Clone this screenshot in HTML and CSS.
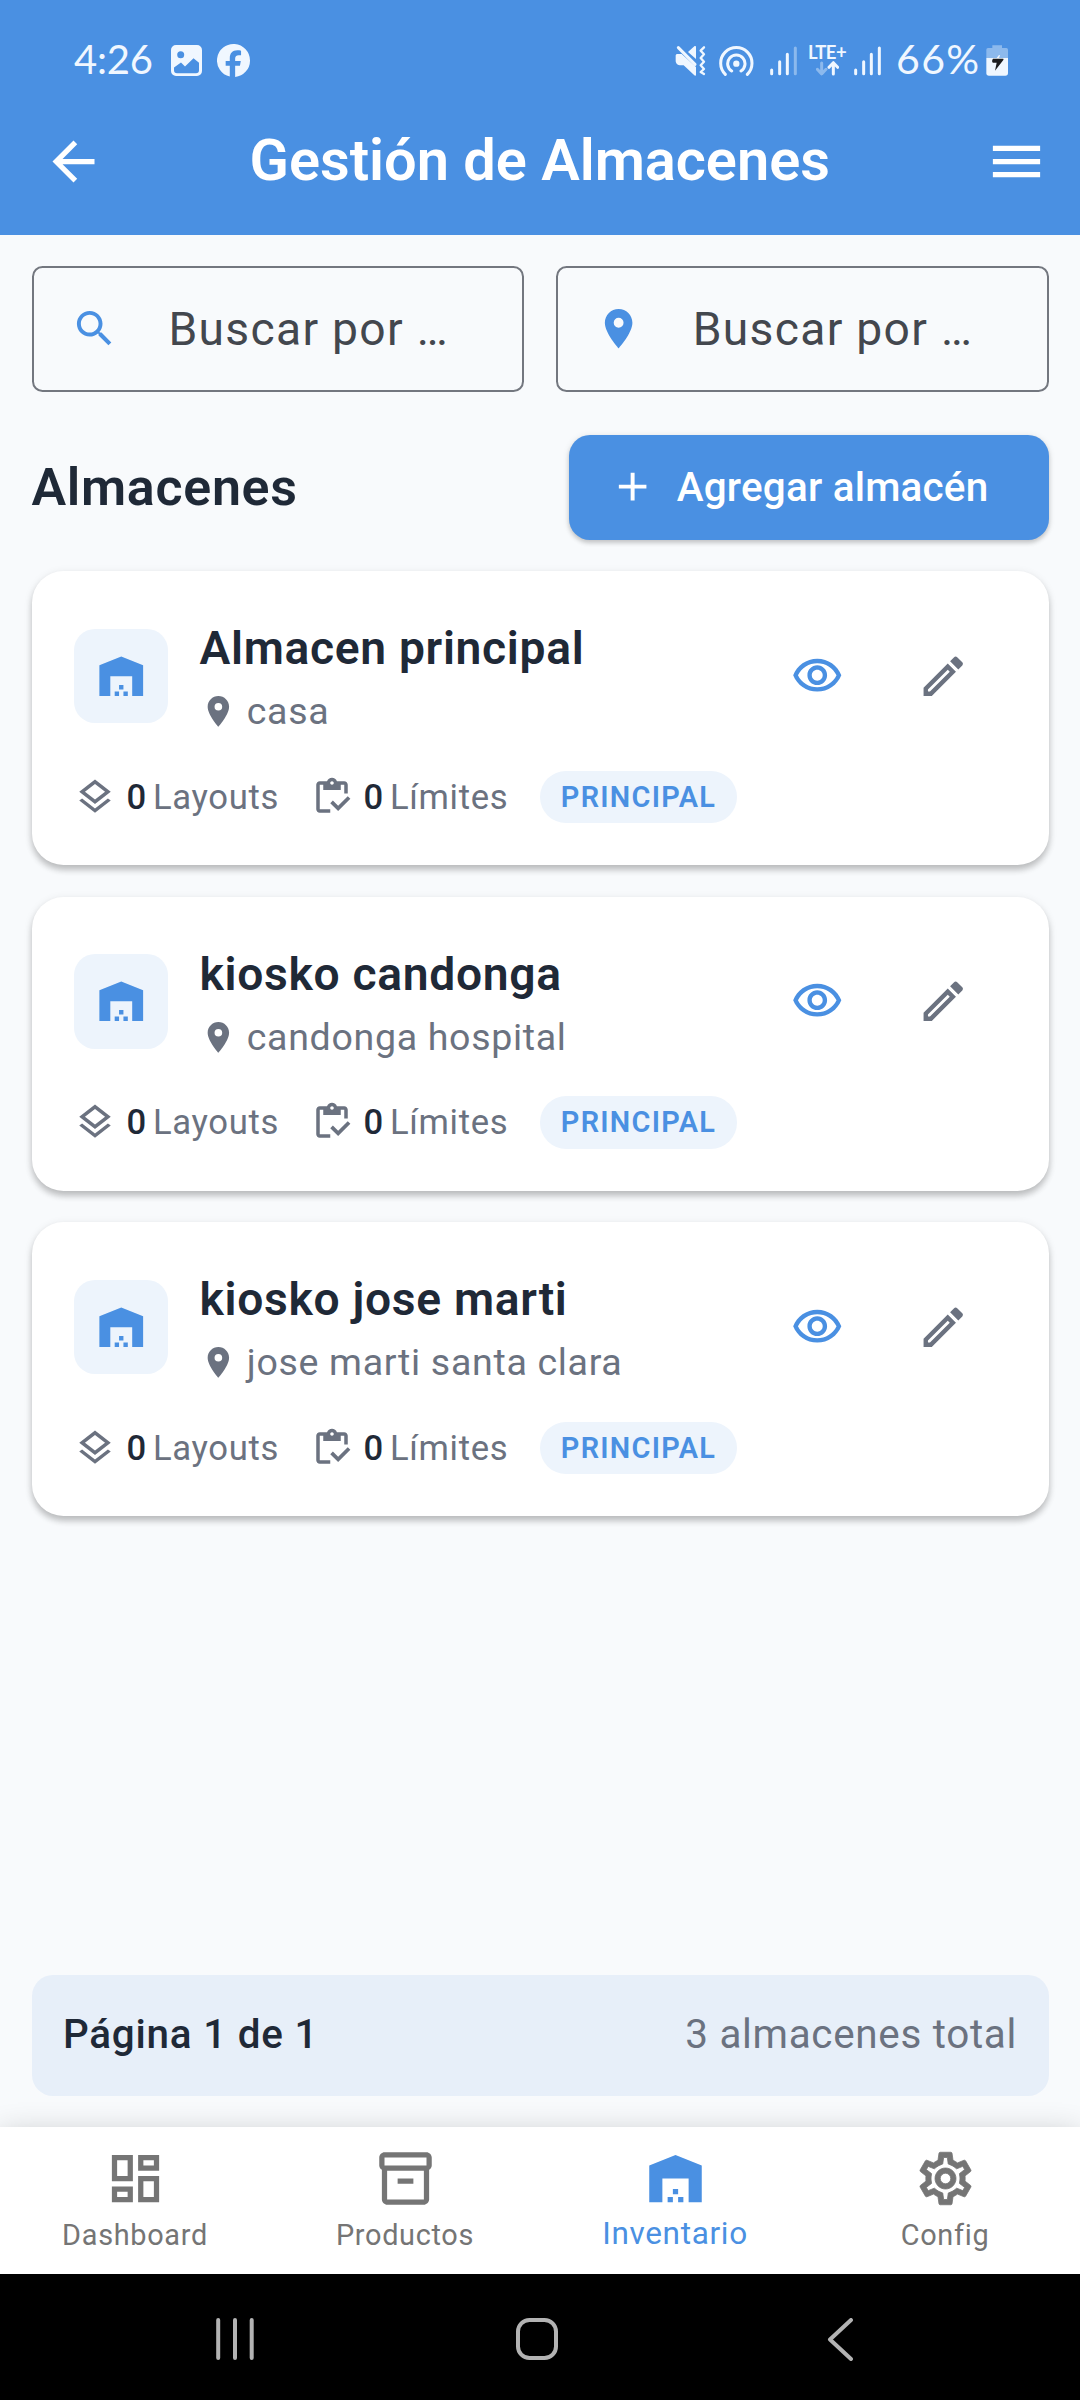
FILE: index.html
```html
<!DOCTYPE html>
<html lang="es">
<head>
<meta charset="utf-8">
<title>Gestión de Almacenes</title>
<link rel="stylesheet" href="styles.css">
</head>
<body>
<svg class="defs" aria-hidden="true">
  <symbol id="warehouse" viewBox="0 0 24 24"><path d="M22 21V7L12 3 2 7v14h5v-9h10v9h5zm-11-2H9v2h2v-2zm2-3h-2v2h2v-2zm2 3h-2v2h2v-2z"/></symbol>
  <symbol id="pin" viewBox="0 0 24 24"><path d="M12 2C8.13 2 5 5.13 5 9c0 5.25 7 13 7 13s7-7.75 7-13c0-3.87-3.13-7-7-7zm0 9.5a2.5 2.5 0 0 1 0-5 2.5 2.5 0 0 1 0 5z"/></symbol>
  <symbol id="layers" viewBox="0 0 24 24"><path d="M11.99 18.54l-7.37-5.73L3 14.07l9 7 9-7-1.63-1.27-7.38 5.74zM12 16l7.36-5.73L21 9l-9-7-9 7 1.63 1.27L12 16zm0-11.47L17.74 9 12 13.47 6.26 9 12 4.53z"/></symbol>
  <symbol id="limits" viewBox="0 0 24 24"><path d="M5 5h2v3h10V5h2v5h2V5c0-1.1-.9-2-2-2h-4.18C14.4 1.84 13.3 1 12 1s-2.4.84-2.82 2H5c-1.1 0-2 .9-2 2v14c0 1.1.9 2 2 2h6v-2H5V5zm7-2c.55 0 1 .45 1 1s-.45 1-1 1-1-.45-1-1 .45-1 1-1z"/><path d="M21 11.5L15.51 17l-3.01-3-1.5 1.5 4.51 4.5L22.5 13z"/></symbol>
  <symbol id="eye" viewBox="0 0 24 24"><path d="M12 6c3.79 0 7.17 2.13 8.82 5.5C19.17 14.87 15.79 17 12 17s-7.17-2.13-8.82-5.5C4.83 8.13 8.21 6 12 6m0-2C7 4 2.73 7.11 1 11.5 2.73 15.89 7 19 12 19s9.27-3.11 11-7.5C21.27 7.11 17 4 12 4zm0 5c1.38 0 2.5 1.12 2.5 2.5S13.38 14 12 14s-2.5-1.12-2.5-2.5S10.62 9 12 9m0-2c-2.48 0-4.5 2.02-4.5 4.5S9.52 16 12 16s4.5-2.02 4.5-4.5S14.48 7 12 7z"/></symbol>
  <symbol id="edit" viewBox="0 0 24 24"><path d="M14.06 9.02l.92.92L5.92 19H5v-.92l9.06-9.06M17.66 3c-.25 0-.51.1-.7.29l-1.83 1.83 3.75 3.75 1.83-1.83c.39-.39.39-1.02 0-1.41l-2.34-2.34c-.2-.2-.45-.29-.71-.29zm-3.6 3.19L3 17.25V21h3.75L17.81 9.94l-3.75-3.75z"/></symbol>
</svg>

<header class="top">
  <div class="status">
    <div class="status-left">
      <span class="clock">4:26</span>
      <svg class="photo" width="31" height="31" viewBox="0 0 31 31"><path fill-rule="evenodd" d="M5 0h21a5 5 0 0 1 5 5v21a5 5 0 0 1-5 5H5a5 5 0 0 1-5-5V5a5 5 0 0 1 5-5zM9.700 6.300a3.500 3.500 0 1 0 0 7 3.500 3.500 0 0 0 0-7zM3 22.500v2.700a3 3 0 0 0 3 3h19a3 3 0 0 0 3-3v-7.500l-5.500-4.500-8.500 8.300-4-4z"/></svg>
      <svg width="33" height="33" viewBox="0 0 24 24"><path d="M24 12a12 12 0 1 0-14.700 11.700v-7.900H6.300v-3.500h3V10.500c0-3.600 1.800-5.900 5.500-5.900.9 0 1.900.1 2.700.3v3.200h-1.700c-1.900 0-2.600.9-2.600 2.500v1.700h4.100l-.6 3.500h-3.500V24A12 12 0 0 0 24 12z"/></svg>
    </div>
    <div class="status-right">
      <svg class="mute" width="31" height="31" viewBox="40 30 93 93"><path d="M48 57h12l43 39v23c0 3-3 4-5 2L66 91h-8c-10 0-16-6-16-14V63c0-4 2-6 6-6zM79 51l19-17c2-2 5-1 5 2v36z"/><path class="line" d="M50 38l50 50"/><path class="line wave" d="M127 37l-10 10 10 11-10 11 10 11-10 11 10 11-10 9 10 6"/></svg>
      <svg class="hotspot" width="35" height="31" viewBox="173 29 105 93"><circle cx="225" cy="85" r="9.500"/><path class="line" d="M211 107a26 26 0 1 1 28 0M192 117a47 47 0 1 1 66 0"/></svg>
      <svg class="signal-a" width="29" height="31" viewBox="328 29 87 93"><path class="line" d="M333 104v11M357 79v36M380 57v58"/><path class="line dim" d="M404 38v77"/></svg>
      <span class="lte"><b>LTE+</b><svg width="23" height="15" viewBox="460 82 69 45"><path class="line dim" d="M477 88v32m-13-13 13 14 13-14"/><path class="line" d="M512 121V87m-13 14 13-14 13 14"/></svg></span>
      <svg class="signal-b" width="29" height="31" viewBox="328 29 87 93"><path class="line" d="M333 104v11M357 79v36M380 57v58M404 38v77"/></svg>
      <span class="percent">66%</span>
      <svg width="22" height="31" viewBox="436 31 66 93"><path opacity=".4" d="M455 32h29v8h13q5 0 5 5v25h-65V45q0-5 5-5h13z"/><path d="M437 70h65v45q0 8-8 8h-49q-8 0-8-8z"/><path d="M468 70l7-9 3 1-3 8z"/><path class="bolt" d="M457 72h29c3 0 3 2 2 4l-25 32 5-24h-11c-3-1-4-8 0-12z"/></svg>
    </div>
  </div>
  <div class="appbar">
    <svg class="i24" viewBox="0 0 24 24"><path d="M20 11H7.830l5.590-5.590L12 4l-8 8 8 8 1.410-1.410L7.830 13H20v-2z"/></svg>
    <h1>Gestión de Almacenes</h1>
    <svg class="i24" viewBox="0 0 24 24"><path d="M3 18h18v-2H3v2zm0-5h18v-2H3v2zm0-7v2h18V6H3z"/></svg>
  </div>
</header>

<main>
  <div class="filters">
    <label class="field"><span class="prefix"><svg class="i18" viewBox="0 0 24 24"><path d="M15.500 14h-.79l-.28-.27C15.410 12.590 16 11.110 16 9.500 16 5.910 13.090 3 9.500 3S3 5.910 3 9.500 5.910 16 9.500 16c1.610 0 3.090-.59 4.230-1.570l.27.28v.79l5 4.990L20.490 19l-4.990-5zm-6 0C7.010 14 5 11.990 5 9.500S7.010 5 9.500 5 14 7.010 14 9.500 11.990 14 9.500 14z"/></svg></span><span>Buscar por …</span></label>
    <label class="field"><span class="prefix"><svg class="i18"><use href="#pin"/></svg></span><span>Buscar por …</span></label>
  </div>
  <div class="heading">
    <h2>Almacenes</h2>
    <button class="add"><svg class="i18" viewBox="0 0 24 24"><path d="M19 13h-6v6h-2v-6H5v-2h6V5h2v6h6v2z"/></svg><span>Agregar almacén</span></button>
  </div>

  <section class="cards">
    <article class="card">
      <div class="row">
        <div class="tile"><svg class="i20"><use href="#warehouse"/></svg></div>
        <div class="info"><h3>Almacen principal</h3><p><svg class="i14"><use href="#pin"/></svg>casa</p></div>
        <div class="action view"><svg class="i20"><use href="#eye"/></svg></div>
        <div class="action"><svg class="i20"><use href="#edit"/></svg></div>
      </div>
      <div class="stats">
        <div class="stat"><svg class="i16"><use href="#layers"/></svg><b>0</b><span>Layouts</span></div>
        <div class="stat"><svg class="i16"><use href="#limits"/></svg><b>0</b><span>Límites</span></div>
        <span class="chip">PRINCIPAL</span>
      </div>
    </article>
    <article class="card">
      <div class="row">
        <div class="tile"><svg class="i20"><use href="#warehouse"/></svg></div>
        <div class="info"><h3>kiosko candonga</h3><p><svg class="i14"><use href="#pin"/></svg>candonga hospital</p></div>
        <div class="action view"><svg class="i20"><use href="#eye"/></svg></div>
        <div class="action"><svg class="i20"><use href="#edit"/></svg></div>
      </div>
      <div class="stats">
        <div class="stat"><svg class="i16"><use href="#layers"/></svg><b>0</b><span>Layouts</span></div>
        <div class="stat"><svg class="i16"><use href="#limits"/></svg><b>0</b><span>Límites</span></div>
        <span class="chip">PRINCIPAL</span>
      </div>
    </article>
    <article class="card">
      <div class="row">
        <div class="tile"><svg class="i20"><use href="#warehouse"/></svg></div>
        <div class="info"><h3>kiosko jose marti</h3><p><svg class="i14"><use href="#pin"/></svg>jose marti santa clara</p></div>
        <div class="action view"><svg class="i20"><use href="#eye"/></svg></div>
        <div class="action"><svg class="i20"><use href="#edit"/></svg></div>
      </div>
      <div class="stats">
        <div class="stat"><svg class="i16"><use href="#layers"/></svg><b>0</b><span>Layouts</span></div>
        <div class="stat"><svg class="i16"><use href="#limits"/></svg><b>0</b><span>Límites</span></div>
        <span class="chip">PRINCIPAL</span>
      </div>
    </article>
  </section>

  <div class="pager"><strong>Página 1 de 1</strong><span>3 almacenes total</span></div>
</main>

<nav class="tabs">
  <a class="tab"><svg class="i24" viewBox="0 0 24 24"><path d="M19 5v2h-4V5h4M9 5v6H5V5h4m10 8v6h-4v-6h4M9 17v2H5v-2h4M21 3h-8v6h8V3zM11 3H3v10h8V3zm10 8h-8v10h8V11zm-10 4H3v6h8v-6z"/></svg><span>Dashboard</span></a>
  <a class="tab"><svg class="i24" viewBox="0 0 24 24"><path d="M20 2H4c-1 0-2 .9-2 2v3.010c0 .72.43 1.340 1 1.690V20c0 1.100 1.100 2 2 2h14c.9 0 2-.9 2-2V8.700c.57-.35 1-.97 1-1.690V4c0-1.100-1-2-2-2zm-1 18H5V9h14v11zm1-13H4V4h16v3z"/><path d="M9 12h6v2H9z"/></svg><span>Productos</span></a>
  <a class="tab active"><svg class="i24"><use href="#warehouse"/></svg><span>Inventario</span></a>
  <a class="tab"><svg class="i24 gear" viewBox="0 0 24 24"><path d="M19.430 12.980c.04-.32.07-.64.07-.98 0-.34-.03-.66-.07-.98l2.110-1.650c.19-.15.24-.42.12-.64l-2-3.460c-.09-.16-.26-.25-.44-.25-.06 0-.12.010-.17.030l-2.490 1c-.52-.4-1.080-.73-1.690-.98l-.38-2.650C14.460 2.180 14.250 2 14 2h-4c-.25 0-.46.18-.49.42l-.38 2.650c-.61.25-1.170.59-1.690.98l-2.490-1c-.06-.02-.12-.03-.18-.03-.17 0-.34.090-.43.25l-2 3.460c-.13.22-.07.49.12.64l2.110 1.650c-.04.32-.07.65-.07.98 0 .33.030.66.070.98l-2.110 1.650c-.19.15-.24.42-.12.64l2 3.460c.09.16.26.25.44.25.06 0 .12-.01.17-.03l2.490-1c.52.4 1.080.73 1.690.98l.38 2.650c.03.24.24.42.49.42h4c.25 0 .46-.18.49-.42l.38-2.650c.61-.25 1.170-.59 1.690-.98l2.490 1c.06.02.12.03.18.03.17 0 .34-.09.43-.25l2-3.460c.12-.22.07-.49-.12-.64l-2.110-1.650zm-1.980-1.710c.04.31.05.52.05.73 0 .21-.02.43-.05.73l-.14 1.130.89.7 1.080.84-.7 1.210-1.270-.51-1.040-.42-.9.68c-.43.32-.84.56-1.250.73l-1.060.43-.16 1.130-.2 1.350h-1.400l-.19-1.350-.16-1.130-1.060-.43c-.43-.18-.83-.41-1.230-.71l-.91-.7-1.060.43-1.270.51-.7-1.210 1.080-.84.89-.7-.14-1.130c-.03-.31-.05-.54-.05-.74s.02-.43.05-.73l.14-1.130-.89-.7-1.080-.84.7-1.210 1.270.51 1.040.42.9-.68c.43-.32.84-.56 1.250-.73l1.060-.43.16-1.130.2-1.350h1.390l.19 1.350.16 1.130 1.060.43c.43.18.83.41 1.230.71l.91.7 1.060-.43 1.270-.51.7 1.210-1.070.85-.89.7.14 1.130zM12 8c-2.210 0-4 1.790-4 4s1.790 4 4 4 4-1.790 4-4-1.790-4-4-4zm0 6c-1.100 0-2-.9-2-2s.9-2 2-2 2 .9 2 2-.9 2-2 2z"/></svg><span>Config</span></a>
</nav>

<footer class="sysnav">
  <svg width="38" height="42" viewBox="0 0 38 42"><path d="M2.200 2v38M19 2v38M35.700 2v38"/></svg>
  <svg class="home" width="42" height="42" viewBox="0 0 42 42"><rect x="2" y="2" width="38" height="38" rx="11.500"/></svg>
  <svg class="prev" width="26" height="43" viewBox="0 0 26 43"><path d="M24 2L3 21.500 24 41"/></svg>
</footer>
</body>
</html>
```
FILE: styles.css
```css
* { box-sizing: border-box; }
body {
  margin: 0;
  width: 1080px;
  height: 2400px;
  display: flex;
  flex-direction: column;
  background: #f8fafc;
  font-family: Roboto, sans-serif;
  letter-spacing: .68px;
  color: #1f2937;
}
h1, h2, h3, p { margin: 0; font-weight: 600; }
svg { display: block; flex: none; fill: currentColor; }
.defs { position: absolute; width: 0; height: 0; }
.i14 { width: 36.75px; height: 36.75px; }
.i16 { width: 42px; height: 42px; }
.i18 { width: 47.25px; height: 47.25px; }
.i20 { width: 52.5px; height: 52.5px; }
.i24 { width: 63px; height: 63px; }

.top { background: #4a90e2; color: #fff; height: 235px; }
.status {
  height: 88px;
  padding: 33px 72px 0 74px;
  display: flex;
  justify-content: space-between;
  align-items: center;
  color: #f0f7ff;
  font: 40px/48px Lato, sans-serif;
}
.status-left, .status-right { display: flex; align-items: center; }
.clock { margin-top: -3px; width: 97px; letter-spacing: -.2px; }
.photo { margin-right: 15px; }
.line { fill: none; stroke: currentColor; stroke-width: 9; stroke-linecap: round; stroke-linejoin: round; }
.wave { stroke-width: 7; }
.dim { opacity: .4; }
.mute { margin-right: 13px; }
.hotspot { margin-right: 16px; }
.signal-a { margin-right: 9px; }
.lte { width: 38px; height: 33px; display: flex; flex-direction: column; align-items: center; margin-right: 8px; }
.lte b { font: 700 18.5px/17px Lato, sans-serif; letter-spacing: -.6px; }
.signal-b { margin-right: 13px; }
.percent { margin: -3px 3px 0 0; width: 87px; font-size: 41px; letter-spacing: 1.4px; white-space: nowrap; }
.bolt { fill: #1c1c1e; }
.appbar {
  height: 147px;
  padding: 0 31.5px 0 42px;
  display: flex;
  justify-content: space-between;
  align-items: center;
}
h1 { font-size: 57.75px; line-height: 68px; margin: -4px 0 0 -11px; font-weight: 560; letter-spacing: -.02px; white-space: nowrap; }

main { flex: 1; padding: 31px 31.5px 31.5px; display: flex; flex-direction: column; }
.filters { display: grid; grid-template-columns: 1fr 1fr; gap: 31.5px; }
.field {
  height: 126px;
  border: 2.6px solid #73777f;
  border-radius: 10.5px;
  display: flex;
  align-items: center;
  font-size: 46.2px;
  letter-spacing: 1.3px;
  color: #43474e;
}
.prefix { width: 135px; padding-left: 37px; color: #4a90e2; }
.heading { display: flex; justify-content: space-between; align-items: center; margin-top: 42.5px; }
h2 { font-size: 51.98px; }
.add {
  width: 479.5px;
  height: 105px;
  padding: 0 0 0 40px;
  border: 0;
  border-radius: 21px;
  background: #4a90e2;
  color: #fff;
  display: flex;
  align-items: center;
  gap: 20.5px;
  font: 500 40.43px Roboto, sans-serif;
  letter-spacing: .2px;
  box-shadow: 0 3px 4px rgba(0, 0, 0, .16), 0 1px 7px rgba(0, 0, 0, .1);
}
.add span { margin-top: -1px; }

.cards { display: flex; flex-direction: column; gap: 31.5px; margin-top: 31.5px; }
.card {
  height: 294px;
  padding: 42px;
  border-radius: 31.5px;
  background: #fff;
  box-shadow: 0 5px 6px rgba(0, 0, 0, .2), 0 2px 10px rgba(0, 0, 0, .09);
}
.row { display: flex; align-items: center; height: 126px; }
.tile {
  width: 94.5px;
  height: 94.5px;
  border-radius: 21px;
  background: #edf4fc;
  color: #4a90e2;
  display: grid;
  place-items: center;
}
.info { flex: 1; padding-left: 31.5px; }
h3 { font-size: 46.2px; line-height: 71px; }
.info p { display: flex; align-items: center; gap: 10.5px; font-size: 37.54px; line-height: 55px; font-weight: 400; color: #6b7280; }
.action { width: 126px; display: grid; place-items: center; color: #6b7280; }
.view { color: #4a90e2; }
.stats { display: flex; align-items: center; gap: 31.5px; margin-top: 31.5px; height: 52.5px; font-size: 34.65px; color: #6b7280; }
.stat { display: flex; align-items: center; }
.stat b { font-weight: 550; color: #1f2937; margin: 0 6px 0 11px; }
.chip {
  height: 52.5px;
  padding: 0 21px;
  border-radius: 26.25px;
  background: #edf4fc;
  color: #4a90e2;
  font-size: 28.88px;
  line-height: 52.5px;
  font-weight: 560;
  letter-spacing: 1.26px;
}

.pager {
  margin-top: auto;
  height: 120.75px;
  padding: 0 31.5px 2px;
  border-radius: 21px;
  background: #e7eff9;
  display: flex;
  justify-content: space-between;
  align-items: center;
  font-size: 40.43px;
  color: #6b7280;
}
.pager strong { font-weight: 500; color: #1f2937; letter-spacing: .75px; }

.tabs {
  height: 147px;
  background: #fff;
  display: grid;
  grid-template-columns: repeat(4, 1fr);
  box-shadow: 0 8px 30px rgba(0, 0, 0, .24);
}
.tab { display: flex; flex-direction: column; align-items: center; padding-top: 20px; color: #757575; font-size: 28.88px; line-height: 50px; }
.active { color: #4a90e2; font-size: 31.5px; line-height: 48px; }
.gear { stroke: currentColor; stroke-width: .3; }

.sysnav { height: 126px; background: #000; color: #b3b3b3; display: flex; align-items: center; padding: 4px 0 0 216px; }
.sysnav svg { fill: none; stroke: currentColor; stroke-width: 4; stroke-linecap: round; stroke-linejoin: round; }
.home { margin-left: 262px; }
.prev { margin-left: 269px; }
```
